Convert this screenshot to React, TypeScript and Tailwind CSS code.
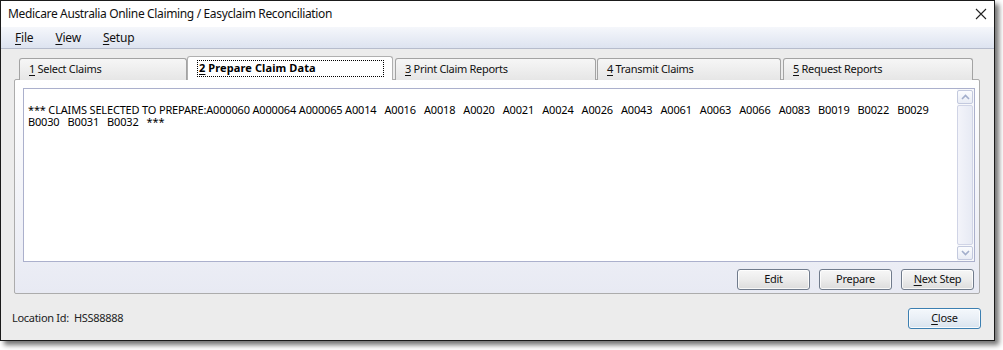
import React from "react";

const ui = { fontFamily: '"Noto Sans", "Open Sans", sans-serif' };
const txt = { fontFamily: '"Noto Sans", "Liberation Sans", sans-serif' };

function U({ children }: { children: React.ReactNode }) {
  return <span className="underline underline-offset-2 decoration-1">{children}</span>;
}

function Tab({ w, ml, children }: { w: string; ml: string; children: React.ReactNode }) {
  return (
    <div
      className={`${w} ${ml} h-[22px] self-end border border-b-0 border-[#a3a3a3] rounded-t-[3px] bg-gradient-to-b from-[#f6f6f6] to-[#e6e6e6] flex items-center pl-[9px] text-[11px] tracking-[-0.3px] text-[#111]`}
    >
      {children}
    </div>
  );
}

function Btn({ children }: { children: React.ReactNode }) {
  return (
    <div className="w-[73px] h-[21px] rounded-[3px] border border-[#707b8c] bg-gradient-to-b from-[#f7f7f7] via-[#ececec] to-[#dcdcdc] flex items-center justify-center text-[11px] tracking-[-0.25px] text-[#111] shadow-[inset_0_0_0_1px_rgba(255,255,255,0.8)]">
      {children}
    </div>
  );
}

export default function App() {
  const line1 =
    "*** CLAIMS SELECTED TO PREPARE:A000060 A000064 A000065 A0014   A0016   A0018   A0020   A0021   A0024   A0026   A0043   A0061   A0063   A0066   A0083   B0019   B0022   B0029";
  const line2 = "B0030   B0031   B0032   ***";
  return (
    <div className="w-[1003px] h-[350px] bg-white relative overflow-hidden" style={ui}>
      <div className="w-[995px] h-[341px] border border-[#1b1b1b] bg-[#ececec] flex flex-col shadow-[4px_4px_5px_rgba(0,0,0,0.55)]">
        {/* title bar */}
        <div className="h-[26px] bg-white flex items-center justify-between pl-[7px] pr-[7px]">
          <span className="text-[12px] tracking-[-0.35px] text-[#111]">
            Medicare Australia Online Claiming / Easyclaim Reconciliation
          </span>
          <svg width="12" height="12" viewBox="0 0 12 12">
            <path d="M1 1 L11 11 M11 1 L1 11" stroke="#222" strokeWidth="1.1" />
          </svg>
        </div>
        {/* menu bar */}
        <div className="h-[22px] bg-gradient-to-b from-[#f5f7fb] to-[#dde3f0] border-b border-[#b6bccc] flex items-center text-[12px] tracking-[-0.2px] text-[#111]">
          <span className="ml-[14px]">
            <U>F</U>ile
          </span>
          <span className="ml-[22px]">
            <U>V</U>iew
          </span>
          <span className="ml-[22px]">
            <U>S</U>etup
          </span>
        </div>
        {/* body */}
        <div className="flex-1 flex flex-col pl-[13px] pt-[7px]">
          {/* tabs */}
          <div className="relative z-10 flex items-end h-[24px] pl-[5px] -mb-[1px]">
            <Tab w="w-[168px]" ml="ml-0">
              <U>1</U>&nbsp;Select Claims
            </Tab>
            <div className="w-[206px] h-[24px] border border-b-0 border-[#b0b0b0] rounded-t-[3px] bg-white flex items-center pl-[9px]">
              <div className="h-[17px] w-[187px] border border-dotted border-black flex items-center pl-[1px] text-[11px] tracking-[0.1px] font-bold text-black">
                <U>2</U>&nbsp;Prepare Claim Data
              </div>
            </div>
            <Tab w="w-[201px]" ml="ml-[2px]">
              <U>3</U>&nbsp;Print Claim Reports
            </Tab>
            <Tab w="w-[184px]" ml="ml-[1px]">
              <U>4</U>&nbsp;Transmit Claims
            </Tab>
            <Tab w="w-[190px]" ml="ml-[2px]">
              <U>5</U>&nbsp;Request Reports
            </Tab>
          </div>
          {/* panel */}
          <div className="w-[966px] h-[215px] border border-[#acacac] rounded-[2px] bg-gradient-to-b from-white to-[#e8eaf3] pl-[8px] pt-[8px] pr-[4px] flex flex-col">
            <div className="h-[174px] border border-[#abb0cc] bg-white flex">
              <div
                className="flex-1 pl-[4px] pt-[15px] text-[11px] leading-[12px] tracking-[-0.17px] text-black whitespace-pre"
                style={txt}
              >
                {line1}
                {"\n"}
                {line2}
              </div>
              <div className="w-[17px] flex flex-col py-[1px] pr-[1px] bg-[#f7f8fb]">
                <div className="h-[14px] border border-[#c3c9de] rounded-[2px] bg-gradient-to-b from-[#fbfcfe] to-[#e9ecf5] flex items-center justify-center">
                  <svg width="9" height="6" viewBox="0 0 9 6">
                    <path d="M1 5 L4.5 1.5 L8 5" stroke="#a2aecb" strokeWidth="1.6" fill="none" />
                  </svg>
                </div>
                <div className="flex-1 border border-[#d0d4e6] rounded-[2px] bg-gradient-to-r from-[#f3f4fa] to-[#e7eaf4] my-[1px]"></div>
                <div className="h-[14px] border border-[#c3c9de] rounded-[2px] bg-gradient-to-b from-[#fbfcfe] to-[#e9ecf5] flex items-center justify-center">
                  <svg width="9" height="6" viewBox="0 0 9 6">
                    <path d="M1 1 L4.5 4.5 L8 1" stroke="#a2aecb" strokeWidth="1.6" fill="none" />
                  </svg>
                </div>
              </div>
            </div>
            <div className="flex justify-end gap-[9px] mt-[7px] pr-[1px]">
              <Btn>Edit</Btn>
              <Btn>Prepare</Btn>
              <Btn>
                <U>N</U>ext Step
              </Btn>
            </div>
          </div>
          {/* footer */}
          <div className="w-[969px] -ml-[2px] mt-[14px] flex items-center justify-between">
            <span className="text-[11px] tracking-[-0.3px] text-[#222]">Location Id:&nbsp; HSS88888</span>
            <div className="w-[73px] h-[21px] rounded-[3px] border border-[#3c7fb1] bg-gradient-to-b from-[#f4f8fc] via-[#e9eff6] to-[#d8e3ee] flex items-center justify-center text-[11px] tracking-[-0.25px] text-[#111] shadow-[inset_0_0_0_1px_rgba(255,255,255,0.8)]">
              <U>C</U>lose
            </div>
          </div>
        </div>
      </div>
    </div>
  );
}
